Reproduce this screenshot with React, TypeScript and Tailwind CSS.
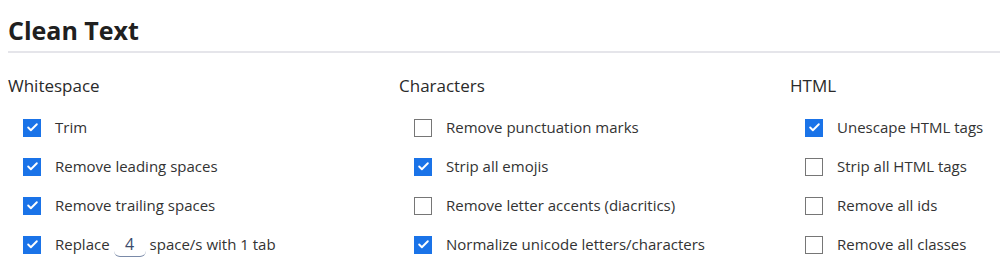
import { Check } from 'lucide-react';
import { useState } from 'react';

type Option = { label: string; checked: boolean };

const sections: { title: string; options: Option[] }[] = [
  {
    title: 'Whitespace',
    options: [
      { label: 'Trim', checked: true },
      { label: 'Remove leading spaces', checked: true },
      { label: 'Remove trailing spaces', checked: true },
      { label: 'replace', checked: true },
    ],
  },
  {
    title: 'Characters',
    options: [
      { label: 'Remove punctuation marks', checked: false },
      { label: 'Strip all emojis', checked: true },
      { label: 'Remove letter accents (diacritics)', checked: false },
      { label: 'Normalize unicode letters/characters', checked: true },
    ],
  },
  {
    title: 'HTML',
    options: [
      { label: 'Unescape HTML tags', checked: true },
      { label: 'Strip all HTML tags', checked: false },
      { label: 'Remove all ids', checked: false },
      { label: 'Remove all classes', checked: false },
    ],
  },
];

const Box = ({ checked }: { checked: boolean }) => (
  <span
    className={
      checked
        ? 'flex-none w-[18px] h-[18px] bg-[#1a73e8] flex items-center justify-center'
        : 'flex-none w-[18px] h-[18px] border border-[#767676] bg-white'
    }
  >
    {checked && <Check className="w-[13px] h-[13px] text-white" strokeWidth={3.5} />}
  </span>
);

const Row = ({ option }: { option: Option }) => {
  const [count, setCount] = useState('4');
  return (
    <div className="flex items-center h-[39px] pl-[15px] gap-[14px]">
      <Box checked={option.checked} />
      {option.label === 'replace' ? (
        <span className="flex items-center">
          Replace
          <input
            value={count}
            onChange={(e) => setCount(e.target.value)}
            className="w-[32px] mx-[4px] text-center text-[16px] text-[#3b4a6b] border-b border-[#7a8aa8] rounded-b-md outline-none bg-transparent"
          />
          space/s with 1 tab
        </span>
      ) : (
        <span>{option.label}</span>
      )}
    </div>
  );
};

export default function App() {
  return (
    <div className="bg-white text-[#202020] pl-[8px]" style={{ fontFamily: '"Open Sans", "Noto Sans", sans-serif' }}>
      <h1 className="text-[25px] font-bold leading-[36px] pt-[12px] pb-[3px] border-b-2 border-[#e5e5ea]">Clean Text</h1>
      <div className="grid grid-cols-[391px_391px_1fr] pt-[20px]">
        {sections.map((s) => (
          <div key={s.title}>
            <h2 className="text-[17px] leading-[26px] mb-[9px] text-[#2a2a2a]">{s.title}</h2>
            <div className="text-[15px] text-[#333]">
              {s.options.map((o) => (
                <Row key={o.label} option={o} />
              ))}
            </div>
          </div>
        ))}
      </div>
    </div>
  );
}
